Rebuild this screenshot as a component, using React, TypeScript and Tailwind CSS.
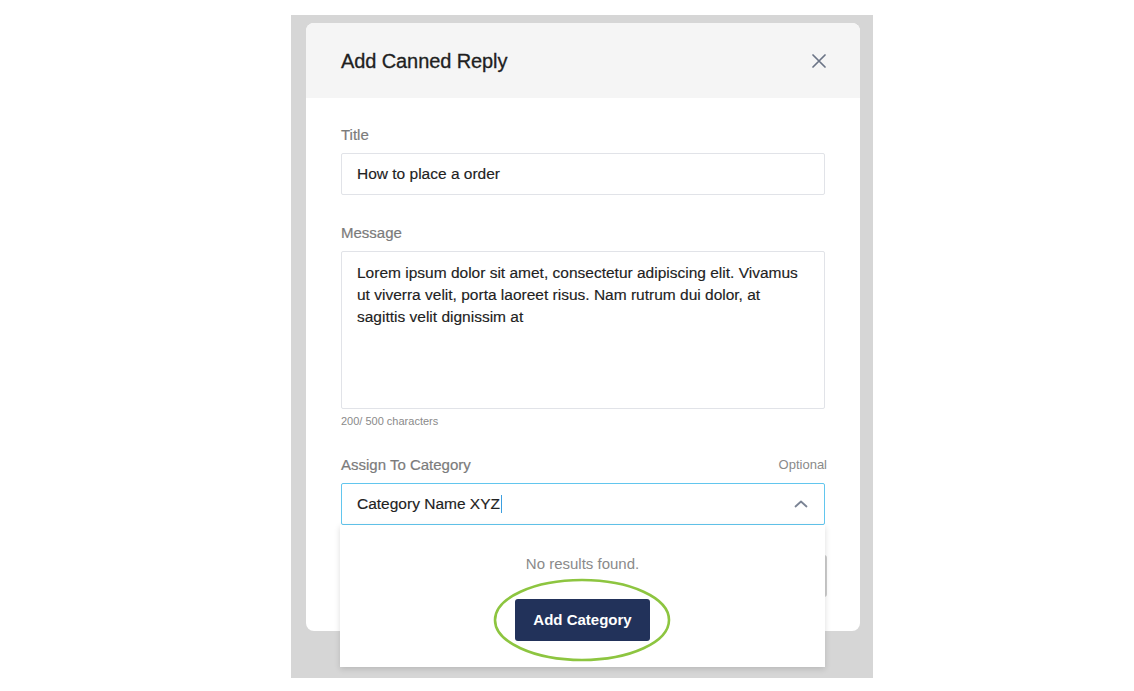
import { useState } from 'react';

const font = { fontFamily: '"Liberation Sans", Arial, sans-serif' };

function CloseIcon() {
  return (
    <svg width="14" height="14" viewBox="0 0 14 14" fill="none" className="text-[#6b7486]">
      <path d="M1 1L13 13M13 1L1 13" stroke="currentColor" strokeWidth="1.7" strokeLinecap="round" />
    </svg>
  );
}

function ChevronUpIcon() {
  return (
    <svg width="14" height="8" viewBox="0 0 14 8" fill="none" className="text-[#7a8394]">
      <path d="M1.5 6.5L7 1.5L12.5 6.5" stroke="currentColor" strokeWidth="1.8" strokeLinecap="round" strokeLinejoin="round" />
    </svg>
  );
}

export default function App() {
  const [title] = useState('How to place a order');

  return (
    <div className="min-h-[691px] w-full bg-white pl-[291px] pt-[15px]" style={font}>
      <div className="w-[582px] h-[663px] bg-[#d6d6d6] pl-[15px] pt-[8px]">
        <div className="relative w-[554px] h-[608px] rounded-[8px] bg-white overflow-visible">
          {/* Header */}
          <div className="flex h-[75px] items-center justify-between rounded-t-[8px] bg-[#f5f5f5] pl-[35px] pr-[34px]">
            <h2 className="text-[20px] font-normal tracking-[-0.1px] text-[#1f1f1f] [-webkit-text-stroke:0.3px_#1f1f1f]">
              Add Canned Reply
            </h2>
            <button className="flex h-[14px] w-[14px] items-center justify-center">
              <CloseIcon />
            </button>
          </div>

          {/* Body */}
          <div className="px-[35px] pt-[28px] pb-[34px]">
            <label className="block h-[18px] text-[15px] leading-[18px] text-[#7b7b7b] [-webkit-text-stroke:0.2px_#7b7b7b]">Title</label>
            <div className="mt-[9px] flex h-[42px] items-center rounded-[2px] border border-[#e1e3e8] px-[15px] text-[15.5px] text-[#222] [-webkit-text-stroke:0.15px_#222]">
              {title}
            </div>

            <label className="mt-[29px] block h-[18px] text-[15px] leading-[18px] text-[#7b7b7b] [-webkit-text-stroke:0.2px_#7b7b7b]">Message</label>
            <div className="mt-[9px] h-[158px] rounded-[2px] border border-[#e1e3e8] px-[15px] pt-[10px] text-[15.5px] leading-[22px] text-[#222] [-webkit-text-stroke:0.15px_#222]">
              Lorem ipsum dolor sit amet, consectetur adipiscing elit. Vivamus
              <br />
              ut viverra velit, porta laoreet risus. Nam rutrum dui dolor, at
              <br />
              sagittis velit dignissim at
            </div>
            <div className="mt-[5px] h-[14px] text-[11px] leading-[14px] text-[#8a8a8a]">200/ 500 characters</div>

            <div className="mt-[28px] flex h-[18px] items-center justify-between">
              <label className="text-[15px] leading-[18px] text-[#7b7b7b] [-webkit-text-stroke:0.2px_#7b7b7b]">Assign To Category</label>
              <span className="mr-[-2px] text-[13px] leading-[18px] text-[#8a8a8a]">Optional</span>
            </div>

            <div className="relative mt-[9px]">
              <div className="flex h-[42px] items-center justify-between rounded-[2px] border border-[#62c6ee] pl-[15px] pr-[16px] text-[15.5px] text-[#222] [-webkit-text-stroke:0.15px_#222]">
                <span className="flex items-center">
                  Category Name XYZ
                  <span className="ml-[1px] inline-block h-[18px] w-[1px] bg-[#3b9fe0]" />
                </span>
                <ChevronUpIcon />
              </div>

              {/* Footer buttons, mostly hidden by the open dropdown */}
              <div className="mt-[30px] mr-[-2px] flex justify-end gap-3">
                <button className="h-[42px] w-[100px] rounded-[3px] border border-[#cfcfcf] bg-white text-[15px] text-[#333]">
                  Cancel
                </button>
                <button className="h-[42px] w-[100px] rounded-[3px] border-2 border-[#cdcdcd] bg-white text-[15px] text-[#333]">
                  Save
                </button>
              </div>

              {/* Dropdown */}
              <div className="absolute left-[-1px] right-0 top-[42px] z-10 flex h-[142px] flex-col items-center bg-white shadow-[0_2px_6px_rgba(0,0,0,0.14)]">
                <div className="mt-[30px] text-[15px] leading-[18px] text-[#8a8a8a]">No results found.</div>
                <div className="relative mt-[26px]">
                  <button className="h-[42px] rounded-[3px] bg-[#22325a] px-[18px] text-[15px] font-bold text-white">
                    Add Category
                  </button>
                  <svg
                    className="pointer-events-none absolute left-[-23px] top-[-21px]"
                    width="180"
                    height="86"
                    viewBox="0 0 180 86"
                    fill="none"
                  >
                    <ellipse cx="90" cy="42" rx="87" ry="40" stroke="#8dc540" strokeWidth="2.6" />
                  </svg>
                </div>
              </div>
            </div>
          </div>
        </div>
      </div>
    </div>
  );
}
